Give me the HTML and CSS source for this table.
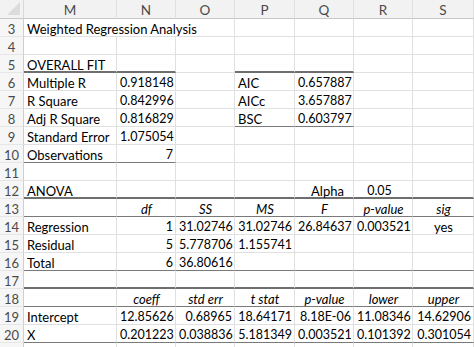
FILE: index.html
```html
<!DOCTYPE html>
<html>
<head>
<meta charset="utf-8">
<link rel="stylesheet" href="styles.css">
</head>
<body>
<div class="sheet">
  <div class="corner"><span class="tri"></span></div>
  <div class="ch">M</div><div class="ch">N</div><div class="ch">O</div><div class="ch">P</div><div class="ch">Q</div><div class="ch">R</div><div class="ch">S</div>

  <div class="rh">3</div><div class="c l span3">Weighted Regression Analysis</div><div class="c"></div><div class="c"></div><div class="c"></div><div class="c"></div>

  <div class="rh">4</div><div class="c"></div><div class="c"></div><div class="c"></div><div class="c"></div><div class="c"></div><div class="c"></div><div class="c"></div>

  <div class="rh">5</div><div class="c l tb">OVERALL FIT</div><div class="c tb"></div><div class="c"></div><div class="c tb"></div><div class="c tb"></div><div class="c"></div><div class="c"></div>

  <div class="rh">6</div><div class="c l">Multiple R</div><div class="c n">0.918148</div><div class="c"></div><div class="c l">AIC</div><div class="c n">0.657887</div><div class="c"></div><div class="c"></div>

  <div class="rh">7</div><div class="c l">R Square</div><div class="c n">0.842996</div><div class="c"></div><div class="c l">AICc</div><div class="c n">3.657887</div><div class="c"></div><div class="c"></div>

  <div class="rh">8</div><div class="c l">Adj R Square</div><div class="c n">0.816829</div><div class="c"></div><div class="c l bb">BSC</div><div class="c n bb">0.603797</div><div class="c"></div><div class="c"></div>

  <div class="rh">9</div><div class="c l">Standard Error</div><div class="c n">1.075054</div><div class="c"></div><div class="c"></div><div class="c"></div><div class="c"></div><div class="c"></div>

  <div class="rh">10</div><div class="c l bb">Observations</div><div class="c n bb">7</div><div class="c"></div><div class="c"></div><div class="c"></div><div class="c"></div><div class="c"></div>

  <div class="rh">11</div><div class="c"></div><div class="c"></div><div class="c"></div><div class="c"></div><div class="c"></div><div class="c"></div><div class="c"></div>

  <div class="rh">12</div><div class="c l tb">ANOVA</div><div class="c tb"></div><div class="c tb"></div><div class="c tb"></div><div class="c ctr alpha tb">Alpha</div><div class="c ctr alphav tb">0.05</div><div class="c tb"></div>

  <div class="rh">13</div><div class="c bb"></div><div class="c h bb">df</div><div class="c h bb">SS</div><div class="c h bb">MS</div><div class="c h bb">F</div><div class="c h bb">p-value</div><div class="c h bb">sig</div>

  <div class="rh">14</div><div class="c l">Regression</div><div class="c n">1</div><div class="c n">31.02746</div><div class="c n">31.02746</div><div class="c n">26.84637</div><div class="c n">0.003521</div><div class="c ctr">yes</div>

  <div class="rh">15</div><div class="c l">Residual</div><div class="c n">5</div><div class="c n">5.778706</div><div class="c n">1.155741</div><div class="c"></div><div class="c"></div><div class="c"></div>

  <div class="rh">16</div><div class="c l bb">Total</div><div class="c n bb">6</div><div class="c n bb">36.80616</div><div class="c bb"></div><div class="c bb"></div><div class="c bb"></div><div class="c bb"></div>

  <div class="rh">17</div><div class="c tb"></div><div class="c tb"></div><div class="c tb"></div><div class="c tb"></div><div class="c tb"></div><div class="c tb"></div><div class="c tb"></div>

  <div class="rh">18</div><div class="c bb"></div><div class="c h bb">coeff</div><div class="c h bb">std err</div><div class="c h bb">t stat</div><div class="c h bb">p-value</div><div class="c h bb">lower</div><div class="c h bb">upper</div>

  <div class="rh">19</div><div class="c l">Intercept</div><div class="c n">12.85626</div><div class="c n">0.68965</div><div class="c n">18.64171</div><div class="c n">8.18E-06</div><div class="c n">11.08346</div><div class="c n">14.62906</div>

  <div class="rh">20</div><div class="c l bb">X</div><div class="c n bb">0.201223</div><div class="c n bb">0.038836</div><div class="c n bb">5.181349</div><div class="c n bb">0.003521</div><div class="c n bb">0.101392</div><div class="c n bb">0.301054</div>

  <div class="rh"></div><div class="c"></div><div class="c"></div><div class="c"></div><div class="c"></div><div class="c"></div><div class="c"></div><div class="c"></div>
</div>
</body>
</html>
```

FILE: styles.css
```css
html, body {
  margin: 0;
  padding: 0;
  background: #ffffff;
}
body {
  width: 474px;
  height: 347px;
  overflow: hidden;
  font-family: Lato, "Open Sans", sans-serif;
  font-size: 13px;
  color: #000;
}
.sheet {
  display: grid;
  grid-template-columns: 24px 93px 59px 59px 60px 59px 59px 61px;
  grid-template-rows: 19px;
  grid-auto-rows: 18px;
}
.corner {
  position: relative;
  background: #f2f2f2;
  border-right: 1px solid #d8d8d8;
  border-bottom: 1px solid #c8c8c8;
  box-sizing: border-box;
}
.tri {
  position: absolute;
  right: 3px;
  bottom: 3px;
  width: 0;
  height: 0;
  border-left: 13px solid transparent;
  border-bottom: 13px solid #dcdcdc;
}
.ch {
  background: #f2f2f2;
  border-right: 1px solid #e0e0e0;
  border-bottom: 1px solid #c8c8c8;
  box-sizing: border-box;
  text-align: center;
  color: #4a4a4a;
  font-size: 13.5px;
  padding-top: 2px;
  line-height: 16px;
}
.rh {
  background: #f6f6f6;
  border-right: 1px solid #cfcfcf;
  border-bottom: 1px solid #e6e6e6;
  box-sizing: border-box;
  text-align: center;
  color: #4a4a4a;
  font-size: 13px;
  padding-top: 2px;
  line-height: 16px;
}
.c {
  border-right: 1px solid #e0e0e0;
  border-bottom: 1px solid #e0e0e0;
  box-sizing: border-box;
  padding: 2px 2px 0 3px;
  line-height: 16px;
  white-space: nowrap;
  overflow: visible;
}
.span3 {
  grid-column: span 3;
}
.l { text-align: left; }
.n {
  text-align: right;
  font-size: 12.5px;
}
.ctr { text-align: center; }
.h {
  text-align: center;
  font-style: italic;
}
.alpha {
  padding-left: 9px;
}
.alphav {
  padding-right: 10px;
  font-size: 12.5px;
}
.tb {
  border-bottom: 2px solid #6e6e6e;
}
.bb {
  border-bottom: 1px solid #7a7a7a;
}
```
